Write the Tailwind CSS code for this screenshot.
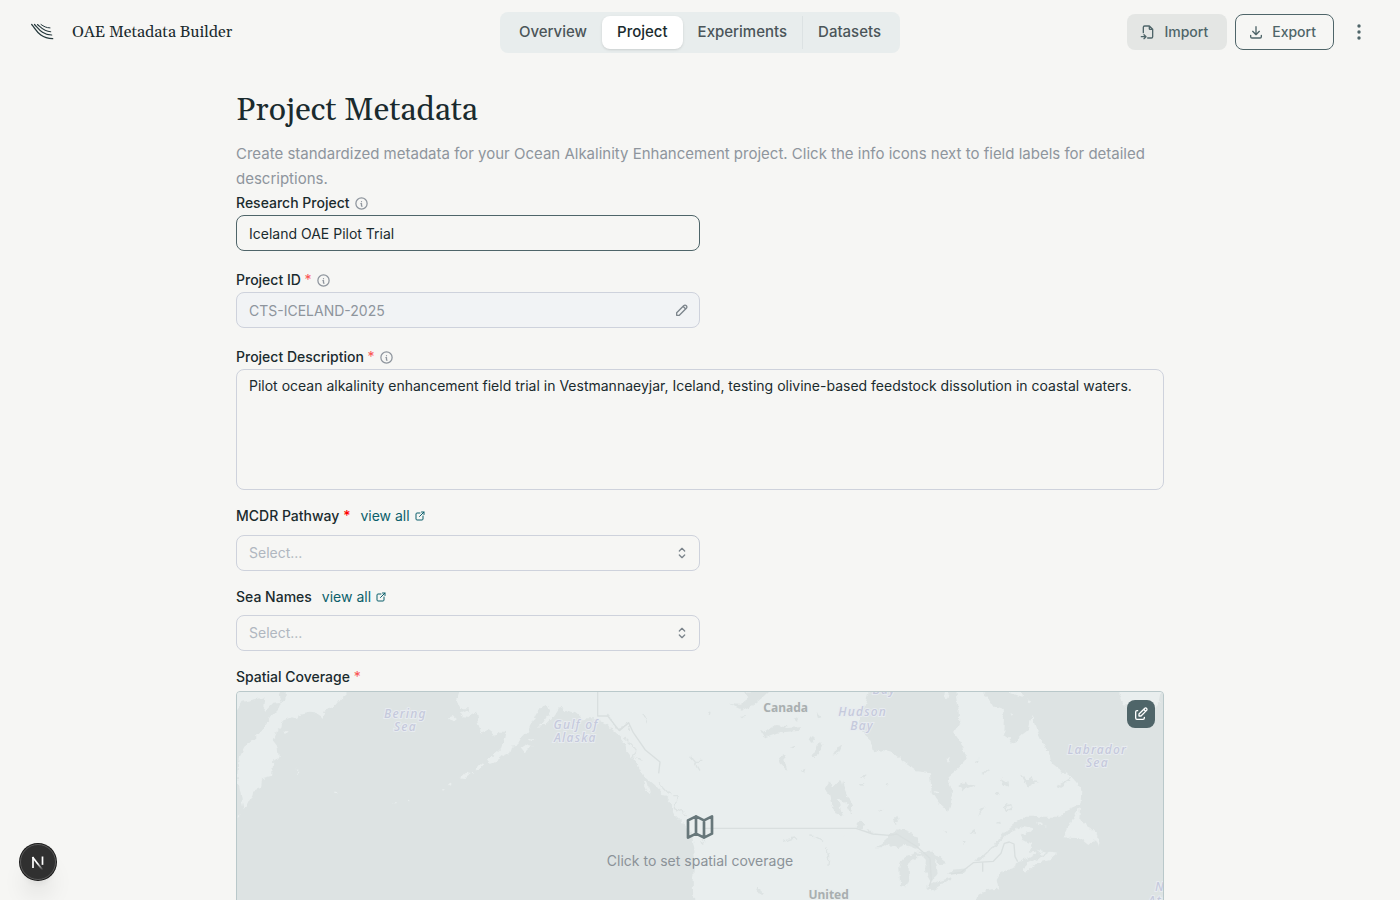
<!DOCTYPE html>
<html lang="en">
<head>
<meta charset="utf-8">
<meta name="viewport" content="width=device-width, initial-scale=1">
<title>OAE Metadata Builder</title>
<script src="https://cdn.jsdelivr.net/npm/@tailwindcss/browser@4"></script>
</head>
<body class="flex h-screen flex-col overflow-hidden bg-[#f6f6f4] font-['Inter',sans-serif] text-sm text-[#1a2b2e]">

<svg class="hidden" aria-hidden="true">
  <symbol id="info" viewBox="0 0 24 24" fill="none" stroke="currentColor" stroke-width="2" stroke-linecap="round" stroke-linejoin="round"><circle cx="12" cy="12" r="9"/><path d="M12 9h.01M11 12h1v4h1"/></symbol>
  <symbol id="external" viewBox="0 0 24 24" fill="none" stroke="currentColor" stroke-width="2" stroke-linecap="round" stroke-linejoin="round"><path d="M12 6H6a2 2 0 0 0-2 2v10a2 2 0 0 0 2 2h10a2 2 0 0 0 2-2v-6M11 13l9-9M15 4h5v5"/></symbol>
  <symbol id="selector" viewBox="0 0 24 24" fill="none" stroke="currentColor" stroke-width="2" stroke-linecap="round" stroke-linejoin="round"><path d="M8 9l4-4l4 4M16 15l-4 4l-4-4"/></symbol>
</svg>

<header class="grid h-16 shrink-0 grid-cols-[1fr_auto_1fr] items-center px-7">
  <a href="#" class="flex items-center gap-4 font-[Georgia,Gelasio,serif] text-base">
    <svg class="h-7 w-7" viewBox="0 0 28 28" fill="none" stroke="#25383c" stroke-linecap="round"><path stroke-width="1.300" d="M3.700 6.500C8 11 11 20.500 24.700 20.700"/><path stroke-width="1.200" d="M6.500 6.500C10.500 10.500 14 17 23.700 17"/><path stroke-width="1.100" d="M9.500 6.500C13 9.500 16 13.700 22.700 13.700"/><path stroke-width="1" d="M13 6.500C16 8.500 18 9.800 22 9.900"/></svg>
    <span>OAE Metadata Builder</span>
  </a>
  <nav class="flex rounded-lg bg-[#e8eded] p-1 text-[15px] font-medium text-[#4b5559]">
    <a href="#" class="flex h-[33px] items-center px-[15px]">Overview</a>
    <a href="#" aria-current="page" class="flex h-[33px] items-center rounded-lg bg-white px-[15px] text-[#1a2b2e] shadow-sm">Project</a>
    <a href="#" class="flex h-[33px] items-center px-[15px]">Experiments</a>
    <a href="#" class="flex h-[33px] items-center border-l border-[#dce2e3] px-[15px]">Datasets</a>
  </nav>
  <div class="flex items-center justify-end gap-2 font-medium text-[#4f6569]">
    <button type="button" class="flex h-9 items-center gap-2 rounded-lg bg-[#e4e6e4] pr-[19px] pl-[13px]">
      <svg class="h-4 w-4" viewBox="0 0 24 24" fill="none" stroke="currentColor" stroke-width="2" stroke-linecap="round" stroke-linejoin="round"><path d="M14 3v4a1 1 0 0 0 1 1h4M5 13V5a2 2 0 0 1 2-2h7l5 5v11a2 2 0 0 1-2 2h-5.500M2 19h7M6 16l3 3l-3 3"/></svg>
      Import
    </button>
    <button type="button" class="flex h-9 items-center gap-2 rounded-lg border border-[#4f6569] pr-[17px] pl-3">
      <svg class="h-4 w-4" viewBox="0 0 24 24" fill="none" stroke="currentColor" stroke-width="2" stroke-linecap="round" stroke-linejoin="round"><path d="M4 17v2a2 2 0 0 0 2 2h12a2 2 0 0 0 2-2v-2M7 11l5 5l5-5M12 4v12"/></svg>
      Export
    </button>
    <button type="button" aria-label="More options" class="ml-1 flex h-7 w-[26px] items-center justify-center">
      <svg class="h-5 w-5" viewBox="0 0 20 20" fill="currentColor"><circle cx="10" cy="4" r="1.700"/><circle cx="10" cy="10" r="1.700"/><circle cx="10" cy="16" r="1.700"/></svg>
    </button>
  </div>
</header>

<main class="min-h-0 flex-1 overflow-y-auto [scrollbar-width:none]">
  <form class="mx-auto w-full max-w-[928px] pt-[26px] pb-8">
    <h1 class="font-[Georgia,Gelasio,serif] text-[32px] leading-[42px]">Project Metadata</h1>
    <p class="mt-[9px] text-[15px] leading-[25px] text-[#8e959d]">Create standardized metadata for your Ocean Alkalinity Enhancement project. Click the info icons next to field labels for detailed descriptions.</p>

    <div class="flex h-6 items-center gap-1 font-medium">
      <label for="project">Research Project</label>
      <button type="button" aria-label="About research project"><svg class="h-[15px] w-[15px] text-[#8e959d]"><use href="#info"/></svg></button>
    </div>
    <input id="project" type="text" value="Iceland OAE Pilot Trial" class="block h-9 w-1/2 rounded-lg border border-[#4f6569] px-3 outline-none">

    <div class="mt-[17px] flex h-6 items-center gap-1 font-medium">
      <label for="pid">Project ID <span class="font-normal text-[#fa5252]">*</span></label>
      <button type="button" aria-label="About project ID"><svg class="h-[15px] w-[15px] text-[#8e959d]"><use href="#info"/></svg></button>
    </div>
    <div class="flex h-9 w-1/2 items-center rounded-lg border border-[#ced2dc] bg-[#f1f3f5] pr-[9px] text-[#8e959d]">
      <input id="pid" type="text" readonly value="CTS-ICELAND-2025" class="h-full min-w-0 flex-1 px-3 outline-none">
      <button type="button" aria-label="Edit project ID"><svg class="h-4 w-4 text-[#7c858c]" viewBox="0 0 24 24" fill="none" stroke="currentColor" stroke-width="2" stroke-linecap="round" stroke-linejoin="round"><path d="M4 20h4L18.500 9.500a2.828 2.828 0 1 0-4-4L4 16v4M13.500 6.500l4 4"/></svg></button>
    </div>

    <div class="mt-[17px] flex h-6 items-center gap-1 font-medium">
      <label for="desc">Project Description <span class="font-normal text-[#fa5252]">*</span></label>
      <button type="button" aria-label="About project description"><svg class="h-[15px] w-[15px] text-[#8e959d]"><use href="#info"/></svg></button>
    </div>
    <textarea id="desc" class="block h-[121px] w-full resize-none rounded-lg border border-[#ced2dc] px-3 py-1.5 outline-none">Pilot ocean alkalinity enhancement field trial in Vestmannaeyjar, Iceland, testing olivine-based feedstock dissolution in coastal waters.</textarea>

    <div class="mt-4 flex h-5 items-center gap-2.5 font-medium">
      <label for="pathway">MCDR Pathway <span class="text-[#ff0000]">*</span></label>
      <a href="#" class="flex items-center gap-1 font-normal text-[#0b5f6b]">view all <svg class="h-3 w-3"><use href="#external"/></svg></a>
    </div>
    <div class="relative mt-[9px] w-1/2">
      <select id="pathway" class="block h-9 w-full appearance-none rounded-lg border border-[#ced2dc] px-3 text-[#b0b7c0] outline-none"><option>Select...</option></select>
      <svg class="pointer-events-none absolute top-2.5 right-2.5 h-4 w-4 text-[#7c858c]"><use href="#selector"/></svg>
    </div>

    <div class="mt-4 flex h-5 items-center gap-2.5 font-medium">
      <label for="sea">Sea Names</label>
      <a href="#" class="flex items-center gap-1 font-normal text-[#0b5f6b]">view all <svg class="h-3 w-3"><use href="#external"/></svg></a>
    </div>
    <div class="relative mt-2 w-1/2">
      <select id="sea" class="block h-9 w-full appearance-none rounded-lg border border-[#ced2dc] px-3 text-[#b0b7c0] outline-none"><option>Select...</option></select>
      <svg class="pointer-events-none absolute top-2.5 right-2.5 h-4 w-4 text-[#7c858c]"><use href="#selector"/></svg>
    </div>

    <div class="mt-4 mb-1 h-5 leading-5 font-medium">Spatial Coverage <span class="font-normal text-[#fa5252]">*</span></div>
    <div class="relative h-[400px] overflow-hidden rounded border border-[#b9c8ca] bg-[#dde3e3]">
      <svg class="block h-full w-full" viewBox="33 36 2778 1194" preserveAspectRatio="xMidYMid slice" aria-hidden="true">
        <defs>
          <filter id="coast" x="0" y="0" width="100%" height="100%" color-interpolation-filters="sRGB"><feTurbulence type="fractalNoise" baseFrequency="0.050" numOctaves="3" seed="4"/><feDisplacementMap in="SourceGraphic" scale="18" xChannelSelector="R" yChannelSelector="G"/></filter>
        </defs>
        <g filter="url(#coast)">
        <rect x="0" y="0" width="2850" height="1260" fill="#dde3e3"/>
        <!-- Kamchatka -->
        <g fill="#e9eeee">
          <path d="M20 20V105L50 65L115 52L112 80L122 92L145 68L165 66L158 84L130 115L105 155L75 185L55 200L38 235L34 285L42 330L52 386L62 380L80 345L82 333L105 325L108 298L138 290L142 240L158 235L155 200L140 180L150 155L165 145L170 122L195 112L212 118L218 103L250 95L270 97L283 117L295 97L320 85L345 55L385 20Z"/>
          <path d="M175 155l10-5l-6 12zM208 268l10 12l-4 2zM36 402l5 2l-6 8zM325 338h6v4h-6zM503 370h6v3h-6zM545 356h5v5h-5zM640 332l14-9l-8 12zM668 316l12-6l-3 10zM706 292l14-14l14 4l-14 12zM735 278l10-4l-4 6zM748 268l14-18l16 2l-14 14zM666 113l20-5l10 10l-16 6zM703 98l18-8l12 10l-4 14l-18-2zM884 205l18-12l18 5l-14 12l-10 10zM908 180l18-4l-10 10z"/>
        </g>
        <path d="M164 20L180 20L178 60L165 68L158 52Z" fill="#dde3e3"/>
        <!-- western North America -->
        <path fill="#e9eeee" d="M705 20L690 65L705 85L728 85L732 105L750 95L755 125L765 160L785 150L808 168L815 155L838 155L832 185L825 205L785 240L795 253L815 240L850 215L855 200L872 198L885 175L905 155L925 110L940 85L960 75L975 90L950 130L935 140L952 138L980 112L1002 80L1022 92L1052 100L1072 118L1117 118L1145 135L1180 168L1197 190L1204 215L1232 250L1252 285L1290 318L1315 345L1337 375L1342 400L1372 430L1397 460L1404 500L1407 540L1400 600L1402 660L1420 760L1470 900L1540 1040L1600 1250H2100V20Z"/>
        <path fill="#e9eeee" d="M1249 305l16 5l8 34l-10-10z"/>
        <!-- eastern North America -->
        <g transform="translate(1872 0)">
          <path fill="#e9eeee" d="M-20 20H395L405 40L430 80L458 90L462 110L460 160L475 170L485 188L500 180L515 165L535 150L545 108L558 145L575 180L595 220L600 245L625 265L665 290L697 330L695 370L650 390L630 410L520 410L470 450L430 497L372 545L385 545L430 508L485 452L520 438L550 445L540 458L510 465L520 480L545 492L540 510L560 520L535 535L500 548L498 562L455 575L440 600L445 625L410 630L385 648L370 700L345 740L350 790L310 850L250 920L180 1000L175 1070L200 1140L205 1250H-20Z"/>
          <path fill="#e9eeee" d="M690 380L675 405L655 440L640 472L690 475L715 495L735 478L745 500V465L720 440L700 430L688 415ZM535 548L575 532L600 515L625 518L600 540L560 550L530 578L522 565ZM555 424L592 440L570 436ZM560 512L590 518L575 524ZM480 20L520 40L515 50L480 40ZM535 55l8 10l-6 5zM800 20L820 70L835 85L900 100L925 70L935 20ZM482 98l8 8l-6 4z"/>
          <path fill="#dde3e3" d="M60 20L45 75L30 110L32 150L60 175L70 217L95 210L130 220L160 245L195 270L240 277L245 340L265 370L295 395L308 350L295 290L325 265L348 240L340 200L312 160L328 130L325 80L318 20Z"/>
          <path fill="#e9eeee" d="M285 36l10 6l-4 16l-10-8zM288 240l12-6l-6 14zM250 330l18 4l-10 6z"/>
          <path fill="#dde3e3" d="M78 502L105 480L130 455L150 445L185 458L208 490L205 508L165 495L140 505L115 492L95 502ZM150 618L148 560L160 530L200 518L222 528L190 535L175 555L178 590L165 622ZM205 515L250 515L290 550L268 552L255 540L260 580L245 605L225 570L228 540ZM228 620L260 605L302 592L300 600L250 628ZM290 582L310 572L350 568L340 582ZM130 420l12-10l5 14l-10 12zM620 318L665 292L655 305L625 328ZM100 388l-10 8l4-10z"/>
          <path fill="#dde3e3" d="M325 318L345 302L350 314L378 316L350 326L338 334ZM452 295L472 306L476 322L462 314ZM512 280L530 300L545 288L550 304L572 306L548 312L535 322L520 300ZM384 410L392 390L408 380L395 395ZM440 430l10-8l6 10zM362 458l12-8l6 12zM394 278l22-8l-14 12zM372 242l14-3l-4 10zM30 292l20-10l-10 14zM28 312h16l-8 6zM105 314l14-2l-6 7zM22 430l12-8l10 14l-10 12l-8-6zM55 450l16 4l-6 6zM280 450l14 2l-4 8zM338 482l6 4l-4 10zM436 340l14-5l-6 11z"/>
          <path fill="none" stroke="#dde3e3" stroke-width="5" d="M468 374l14-3l3 12l-12 8l-6-8z"/>
        </g>
        <!-- inland lakes of western Canada -->
        <g transform="translate(942 0)" fill="#dde3e3">
          <path d="M570 72L600 74L625 55L610 36L690 30L665 55L640 75L610 90ZM660 158L680 152L705 135L740 138L735 144L785 142L780 152L710 158L670 174ZM806 180L815 166L824 178L814 192ZM816 235L824 205L840 182L846 196L834 225ZM878 224L892 202L910 194L898 215ZM716 232L728 222L735 245L742 270L722 250ZM782 272L796 266L792 280ZM748 204L768 196L760 208ZM854 326L870 300L876 325L905 298L915 330L936 380L932 405L920 375L890 350L908 405L900 412L875 375L868 345ZM648 626L664 628L668 642L655 640ZM764 116L775 112L770 122ZM828 100L842 114L834 118ZM504 98l8-6l-2 12zM600 110l16-2l-10 7zM950 440l10-15v22z"/>
        </g>
        <g transform="translate(942 0)" fill="none" stroke="#dde3e3" stroke-width="4">
          <path d="M305 105L318 115L325 130M450 228L464 244L490 244M464 244L480 272M732 484L745 478L768 474M808 468L830 470L850 482M858 502L866 530L864 556M200 105L235 150L262 130L272 150M250 170L272 190L290 215L278 230L310 240M360 310L385 340L398 345M400 350L412 350L402 385L440 405M480 485a7 7 0 1 0 8-6"/>
        </g>
        </g>
        <!-- borders -->
        <path fill="none" stroke="#d9dfdf" stroke-width="4" stroke-linejoin="round" d="M1115 36V108H1145L1180 152L1208 128L1222 158L1258 210L1302 246L1298 280M1430 445H1890L1940 462L1990 466L2012 462L2070 498L2112 535L2116 600L2110 618M2175 582L2205 577L2242 548L2302 544L2325 520L2335 490L2350 486L2364 492L2367 530L2375 545M2270 545V575"/>
        <!-- place names -->
        <g class="font-['Noto_Sans',sans-serif] text-[36px] font-medium italic tracking-widest" fill="#c5c9dc" stroke="#e8ecf0" stroke-width="6" paint-order="stroke" text-anchor="middle">
          <text x="538" y="113">Bering</text><text x="538" y="153">Sea</text>
          <text x="1050" y="147">Gulf of</text><text x="1048" y="187">Alaska</text>
          <text x="1910" y="109">Hudson</text><text x="1908" y="149">Bay</text>
          <text x="1975" y="42">Bay</text>
          <text x="2614" y="221">Labrador</text><text x="2614" y="261">Sea</text>
          <text x="2787" y="634" text-anchor="start">North</text><text x="2767" y="674" text-anchor="start">Atlantic</text>
        </g>
        <g class="font-['Noto_Sans',sans-serif] text-[36px] font-bold" fill="#a9afb0" stroke="#e8eded" stroke-width="4" paint-order="stroke" text-anchor="middle">
          <text x="1679" y="95">Canada</text><text x="1808" y="658">United</text><text x="1808" y="704">States</text>
        </g>
      </svg>
      <button type="button" class="absolute inset-x-0 top-[119px] flex flex-col items-center gap-2 text-[#8b9298]">
        <svg class="h-8 w-8 text-[#67777a]" viewBox="0 0 24 24" fill="none" stroke="currentColor" stroke-width="2" stroke-linecap="round" stroke-linejoin="round"><path d="M3 7l6-3l6 3l6-3v13l-6 3l-6-3l-6 3V7M9 4v13M15 7v13"/></svg>
        Click to set spatial coverage
      </button>
      <button type="button" aria-label="Edit spatial coverage" class="absolute top-2 right-2 flex h-7 w-7 items-center justify-center rounded-lg bg-[#4f6569] text-white">
        <svg class="h-4 w-4" viewBox="0 0 24 24" fill="none" stroke="currentColor" stroke-width="2" stroke-linecap="round" stroke-linejoin="round"><path d="M7 7H6a2 2 0 0 0-2 2v9a2 2 0 0 0 2 2h9a2 2 0 0 0 2-2v-1M20.385 6.585a2.100 2.100 0 0 0-2.970-2.970L9 12v3h3l8.385-8.415zM16 5l3 3"/></svg>
      </button>
    </div>
  </form>
</main>

<button type="button" aria-label="Open developer tools" class="fixed bottom-5 left-5 flex h-9 w-9 items-center justify-center rounded-full bg-[#303030] shadow-xl ring-1 ring-[#171717]">
  <svg class="h-9 w-9" viewBox="0 0 36 36" fill="none" stroke-width="1.700"><defs><linearGradient id="fade" gradientUnits="userSpaceOnUse" x1="0" y1="13" x2="0" y2="26"><stop offset=".5" stop-color="#fff"/><stop offset="1" stop-color="#fff" stop-opacity="0"/></linearGradient></defs><circle cx="18" cy="18" r="17.500" stroke="#5a5a5a" stroke-width="1"/><path stroke="#fff" d="M13 24V13"/><path stroke="url(#fade)" d="M12.500 13L22.500 26"/><path stroke="url(#fade)" d="M22.500 12.500V21"/></svg>
</button>
</body>
</html>
